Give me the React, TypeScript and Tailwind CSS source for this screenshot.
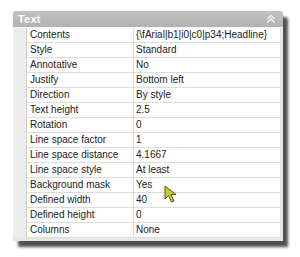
import React from "react";

const rows: [string, string][] = [
  ["Contents", "{\\fArial|b1|i0|c0|p34;Headline}"],
  ["Style", "Standard"],
  ["Annotative", "No"],
  ["Justify", "Bottom left"],
  ["Direction", "By style"],
  ["Text height", "2.5"],
  ["Rotation", "0"],
  ["Line space factor", "1"],
  ["Line space distance", "4.1667"],
  ["Line space style", "At least"],
  ["Background mask", "Yes"],
  ["Defined width", "40"],
  ["Defined height", "0"],
  ["Columns", "None"],
];

function Cursor() {
  return (
    <svg className="absolute left-[164px] top-[185px]" width="14" height="19" viewBox="0 0 14 19">
      <path
        d="M1 1 L1 14 L4.5 10.5 L7.5 17 L10 16 L7 9.5 L12 9.5 Z"
        fill="#c9c92a"
        stroke="#5a5a10"
        strokeWidth="1"
        strokeLinejoin="round"
      />
    </svg>
  );
}

export default function App() {
  return (
    <div
      className="relative w-[300px] h-[257px] bg-white pt-[11px] pl-[13px]"
      style={{ fontFamily: '"Liberation Sans", Arial, sans-serif' }}
    >
      <div className="w-[270px] rounded-t-[3px] bg-[#e6e6e6] shadow-[5px_6px_3px_rgba(50,50,50,0.85)]">
        <div className="h-[16px] flex items-center justify-between px-[5px] rounded-t-[3px] bg-gradient-to-b from-[#c2c2c2] to-[#b2b2b2]">
          <span className="text-white text-[11px] font-bold leading-none tracking-[0.2px]">Text</span>
          <svg width="10" height="10" viewBox="0 0 10 10" className="mr-[2px]">
            <path d="M1.5 5 L5 1.5 L8.5 5 M1.5 8.5 L5 5 L8.5 8.5" fill="none" stroke="#f4f4f4" strokeWidth="1.3" />
          </svg>
        </div>
        <div className="flex pr-[3px] pb-[3px] border-t border-[#f4f4f4]">
          <div className="w-[14px] bg-[#ececec] border-r border-[#d0d0d0]" />
          <div className="flex-1 bg-white">
            {rows.map(([k, v]) => (
              <div key={k} className="flex h-[15px] border-b border-[#dcdcdc] text-[10px] text-[#222222] leading-none">
                <div className="w-[107px] pl-[3px] flex items-center border-r border-[#dcdcdc] truncate">{k}</div>
                <div className="flex-1 pl-[2px] flex items-center whitespace-nowrap overflow-hidden">{v}</div>
              </div>
            ))}
          </div>
        </div>
      </div>
      <Cursor />
    </div>
  );
}
